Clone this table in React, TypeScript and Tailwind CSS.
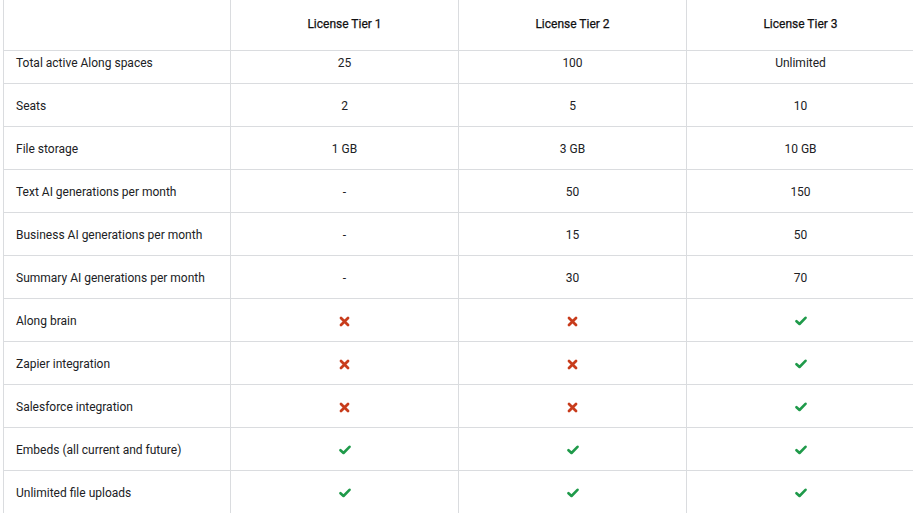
import React from "react";

type V = string | "x" | "c";

const rows: [string, V, V, V][] = [
  ["Total active Along spaces", "25", "100", "Unlimited"],
  ["Seats", "2", "5", "10"],
  ["File storage", "1 GB", "3 GB", "10 GB"],
  ["Text AI generations per month", "-", "50", "150"],
  ["Business AI generations per month", "-", "15", "50"],
  ["Summary AI generations per month", "-", "30", "70"],
  ["Along brain", "x", "x", "c"],
  ["Zapier integration", "x", "x", "c"],
  ["Salesforce integration", "x", "x", "c"],
  ["Embeds (all current and future)", "c", "c", "c"],
  ["Unlimited file uploads", "c", "c", "c"],
];

const Cross = () => (
  <svg width="11" height="11" viewBox="0 0 11 11">
    <path d="M2 2 L9 9 M9 2 L2 9" stroke="#c83c1c" strokeWidth="2.8" strokeLinecap="round" />
  </svg>
);

const Check = () => (
  <svg width="12" height="10" viewBox="0 0 12 10">
    <path d="M1.5 5.2 L4.5 8 L10.5 1.8" stroke="#1f9a4a" strokeWidth="2.6" fill="none" strokeLinecap="round" strokeLinejoin="round" />
  </svg>
);

function Val({ v }: { v: V }) {
  if (v === "x") return <Cross />;
  if (v === "c") return <Check />;
  return <span>{v}</span>;
}

export default function App() {
  return (
    <div
      className="w-[913px] h-[513px] overflow-hidden bg-white pl-[3px] text-[12px] text-[#202124]"
      style={{ fontFamily: "Roboto, 'Liberation Sans', sans-serif" }}
    >
      <div className="grid grid-cols-[227px_228px_228px_228px] w-[911px]">
        <div className="h-[51px] border-l border-b border-[#dadcdf]" />
        {["License Tier 1", "License Tier 2", "License Tier 3"].map((t) => (
          <div
            key={t}
            className="h-[51px] border-l border-b border-[#dadcdf] flex items-center justify-center pb-[3px] text-[#111]"
            style={{ WebkitTextStroke: "0.25px #111" }}
          >
            {t}
          </div>
        ))}
        {rows.map((r, i) => {
          const first = i === 0;
          const h = first ? "h-[33px] items-start pt-[5px]" : "h-[43px] items-center pt-[2px]";
          return (
            <React.Fragment key={r[0]}>
              <div className={`${h} border-l border-b border-[#dadcdf] flex pl-[12px] leading-[15px]`}>
                {r[0]}
              </div>
              {[r[1], r[2], r[3]].map((v, j) => (
                <div
                  key={j}
                  className={`${h} border-l border-b border-[#dadcdf] flex justify-center leading-[15px]`}
                >
                  <Val v={v} />
                </div>
              ))}
            </React.Fragment>
          );
        })}
      </div>
    </div>
  );
}
